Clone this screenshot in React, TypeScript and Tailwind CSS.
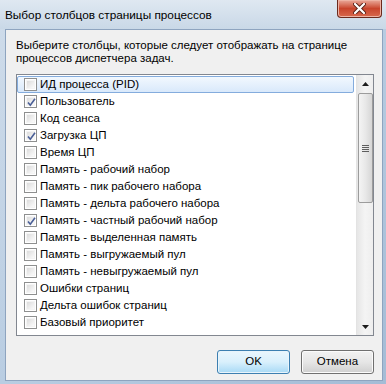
import React from 'react';

const items: { label: string; checked: boolean }[] = [
  { label: 'ИД процесса (PID)', checked: false },
  { label: 'Пользователь', checked: true },
  { label: 'Код сеанса', checked: false },
  { label: 'Загрузка ЦП', checked: true },
  { label: 'Время ЦП', checked: false },
  { label: 'Память - рабочий набор', checked: false },
  { label: 'Память - пик рабочего набора', checked: false },
  { label: 'Память - дельта рабочего набора', checked: false },
  { label: 'Память - частный рабочий набор', checked: true },
  { label: 'Память - выделенная память', checked: false },
  { label: 'Память - выгружаемый пул', checked: false },
  { label: 'Память - невыгружаемый пул', checked: false },
  { label: 'Ошибки страниц', checked: false },
  { label: 'Дельта ошибок страниц', checked: false },
  { label: 'Базовый приоритет', checked: false },
];

function CheckBox({ checked }: { checked: boolean }) {
  return (
    <div className="w-[13px] h-[13px] border border-[#8e8f8f] bg-white p-px shrink-0">
      <div className="relative w-full h-full bg-gradient-to-br from-[#dcdcdc] to-[#fbfbfb] border border-[#f4f4f4]">
        {checked && (
          <svg className="absolute -left-px -top-px" width="11" height="11" viewBox="0 0 11 11">
            <path d="M2 5.5 L4.3 8.2 L9 1.8" fill="none" stroke="#4a5f97" strokeWidth="1.6" />
          </svg>
        )}
      </div>
    </div>
  );
}

function Row({ label, checked, selected }: { label: string; checked: boolean; selected?: boolean }) {
  return (
    <div
      className={
        'h-[17px] flex items-center pl-[6px] gap-[3px] rounded-[2px] border ' +
        (selected
          ? 'border-[#84acdd] bg-gradient-to-b from-[#f2f8fe] to-[#d9e9fb]'
          : 'border-transparent')
      }
    >
      <CheckBox checked={checked} />
      <span className="text-[11.5px] leading-[15px] text-black whitespace-nowrap">{label}</span>
    </div>
  );
}

function Button({ label, primary }: { label: string; primary?: boolean }) {
  return (
    <div
      className={
        'w-[73px] h-[24px] rounded-[3px] border flex items-center justify-center text-[11.5px] text-black ' +
        (primary
          ? 'border-[#3c7fb1] bg-gradient-to-b from-[#eaf6fd] via-[#d9f0fc] to-[#a7d9f5] shadow-[inset_0_0_0_1px_#e8f4fb]'
          : 'border-[#707070] bg-gradient-to-b from-[#f2f2f2] via-[#e6e6e6] to-[#cfcfcf] shadow-[inset_0_0_0_1px_#fbfbfb]')
      }
    >
      {label}
    </div>
  );
}

export default function App() {
  return (
    <div
      className="w-[386px] h-[384px] overflow-hidden flex flex-col bg-gradient-to-br from-[#cfdcea] via-[#b9cde2] to-[#a4bcd6]"
      style={{ fontFamily: '"Liberation Sans", Arial, sans-serif' }}
    >
      {/* title bar */}
      <div className="h-[29px] flex items-start justify-between pl-[5px] pr-[4px] bg-gradient-to-b from-[#dfe8f1] to-[#c9d8e7]">
        <div className="pt-[7px] text-[11.8px] text-black">Выбор столбцов страницы процессов</div>
        <div className="w-[45px] h-[18px] rounded-b-[4px] border border-t-0 border-[#6b2a1d] bg-gradient-to-b from-[#e9a99b] via-[#c8442c] to-[#d7684d] flex items-center justify-center shadow-[inset_0_0_0_1px_#eeb3a4]">
          <svg width="13" height="11" viewBox="0 0 13 11">
            <path d="M2 1 L11 10 M11 1 L2 10" stroke="#5a2218" strokeWidth="4" strokeLinecap="round" />
            <path d="M2 1 L11 10 M11 1 L2 10" stroke="#ffffff" strokeWidth="2.2" strokeLinecap="round" />
          </svg>
        </div>
      </div>

      {/* client area */}
      <div className="ml-[5px] mr-[3px] mb-[3px] flex-1 border border-[#8ea4bf] bg-[#f0f0f0] flex flex-col pl-[10px] pr-[8px]">
        <div className="pt-[9px] text-[11.5px] leading-[13px] text-black">
          Выберите столбцы, которые следует отображать на странице
          <br />
          процессов диспетчера задач.
        </div>

        <div className="mt-[9px] h-[262px] border border-[#828790] bg-white flex">
          <div className="flex-1 pt-[1px] pr-[2px]">
            {items.map((it, i) => (
              <Row key={it.label} label={it.label} checked={it.checked} selected={i === 0} />
            ))}
          </div>
          {/* scrollbar */}
          <div className="w-[17px] bg-gradient-to-r from-[#e6e6e6] via-[#f4f4f4] to-[#eeeeee] border-l border-[#e3e3e3] flex flex-col items-center">
            <div className="h-[17px] flex items-center justify-center">
              <svg width="7" height="4" viewBox="0 0 7 4">
                <path d="M0 4 L3.5 0 L7 4 Z" fill="#1d1d1d" />
              </svg>
            </div>
            <div className="mt-[1px] w-[15px] h-[110px] rounded-[2px] border border-[#9c9c9c] bg-gradient-to-r from-[#f4f4f4] via-[#e8e8e8] to-[#d6d6d6] flex flex-col items-center justify-center gap-[1px]">
              <div className="w-[7px] h-px bg-[#5e5e5e]" />
              <div className="w-[7px] h-px bg-[#5e5e5e]" />
              <div className="w-[7px] h-px bg-[#5e5e5e]" />
              <div className="w-[7px] h-px bg-[#5e5e5e]" />
            </div>
            <div className="flex-1" />
            <div className="h-[17px] flex items-center justify-center">
              <svg width="7" height="4" viewBox="0 0 7 4">
                <path d="M0 0 L3.5 4 L7 0 Z" fill="#1d1d1d" />
              </svg>
            </div>
          </div>
        </div>

        <div className="mt-[14px] flex justify-end gap-[11px]">
          <Button label="OK" primary />
          <Button label="Отмена" />
        </div>
      </div>
    </div>
  );
}
